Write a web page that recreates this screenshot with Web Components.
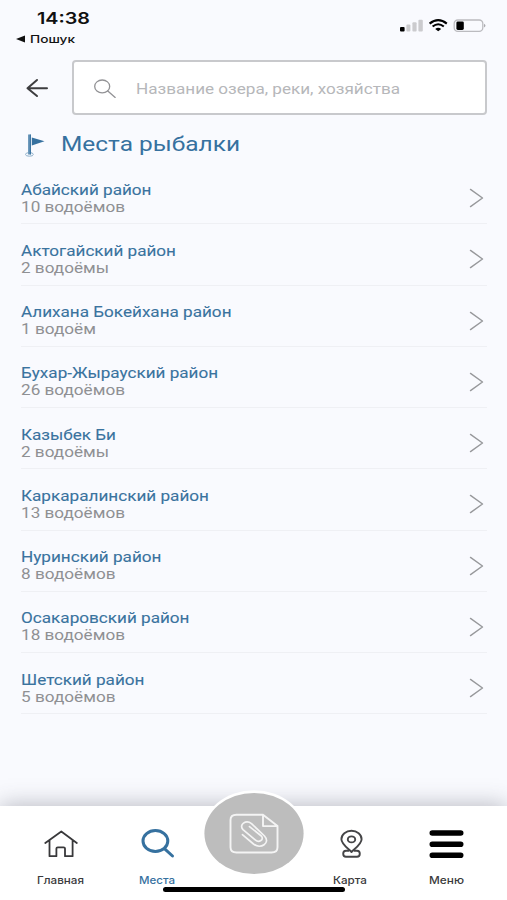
<!DOCTYPE html>
<html lang="ru">
<head>
<meta charset="utf-8">
<title>Места рыбалки</title>
<style>
    html, body {
        margin: 0;
        height: 100%;
    }
    body {
        overflow: hidden;
        background: #f9fafe;
        font-family: Roboto, "Liberation Sans", sans-serif;
    }
</style>
</head>
<body>
<fishing-app></fishing-app>
<script>
// one line of text stretched to the given width
window.customElements.define('wide-text', class extends HTMLElement {

    constructor() {
        super()
        this.attachShadow({ mode: 'open' })
        this.shadowRoot.innerHTML = `
            <style>
                :host {
                    display: block;
                    white-space: nowrap;
                }
                span {
                    display: inline-block;
                    vertical-align: top;
                    transform-origin: 0 50%;
                }
            </style>
            <span><slot></slot></span>
        `
    }

    connectedCallback() {
        const width = Number(this.getAttribute('width'))
        const span = this.shadowRoot.querySelector('span')
        this.style.width = `${width}px`
        span.style.transform = `scaleX(${width / span.getBoundingClientRect().width})`
    }
})

window.customElements.define('status-bar', class extends HTMLElement {

    constructor() {
        super()
        this.attachShadow({ mode: 'open' })
        this.shadowRoot.innerHTML = `
            <style>
                :host {
                    display: flex;
                    justify-content: space-between;
                    height: 60px;
                    box-sizing: border-box;
                    padding: 8px 20px 0 16px;
                    font-family: Inter, sans-serif;
                    color: #111;
                }
                .time {
                    margin-left: 21px;
                    font-size: 16px;
                    line-height: 21px;
                    font-weight: 600;
                }
                .back {
                    display: flex;
                    align-items: center;
                    gap: 5px;
                    font-size: 11px;
                    line-height: 20px;
                    font-weight: 500;
                }
                .signs {
                    margin-top: 10px;
                }
            </style>
            <div>
                <wide-text class="time" width="53">14:38</wide-text>
                <div class="back">
                    <svg width="9" height="8"><path d="M0 4 9 .5v7z" fill="#111"/></svg>
                    <wide-text width="45">Пошук</wide-text>
                </div>
            </div>
            <svg class="signs" width="88" height="16" viewBox="0 0 88 16">
                <rect x="1" y="9" width="4.6" height="4.6" rx="1" fill="#000"/>
                <g fill="#cbcbce">
                    <rect x="7.4" y="6.4" width="4" height="7.2" rx="1"/>
                    <rect x="13.4" y="4.2" width="4.2" height="9.4" rx="1"/>
                    <rect x="19.4" y="1.8" width="4.4" height="11.8" rx="1"/>
                </g>
                <g fill="none" stroke="#000" stroke-width="2.1">
                    <path d="M30.6 5.6Q39.2-1.4 47.8 5.6"/>
                    <path d="M33.6 8.5Q39.2 4 44.8 8.5"/>
                </g>
                <path d="M36.2 10.9Q39.2 8.7 42.2 10.9L39.2 13.3z" fill="#000"/>
                <rect x="55.2" y="2" width="28.6" height="11.4" rx="3.6" fill="none" stroke="#bbbbbf" stroke-width="1.3"/>
                <rect x="57.4" y="3.4" width="7.4" height="8.6" rx="1.4" fill="#000"/>
                <path d="M85 5.8q3 1.9 0 3.8z" fill="#aaaaae"/>
            </svg>
        `
    }
})

window.customElements.define('search-bar', class extends HTMLElement {

    constructor() {
        super()
        this.attachShadow({ mode: 'open' })
        this.shadowRoot.innerHTML = `
            <style>
                :host {
                    display: flex;
                    align-items: center;
                    gap: 23px;
                    padding: 0 20px 0 26px;
                    height: 55px;
                }
                .field {
                    flex: 1;
                    display: flex;
                    align-items: center;
                    gap: 17.5px;
                    height: 55px;
                    box-sizing: border-box;
                    padding: 3px 20px 0;
                    border: 2px solid #c8c9cc;
                    border-radius: 4px;
                    background: #fff;
                    color: #b6b7ba;
                    font-size: 14px;
                    line-height: 20px;
                }
            </style>
            <svg width="23" height="20" viewBox="0 0 23 20" fill="none" stroke="#3d3d3f" stroke-width="2" stroke-linecap="round" stroke-linejoin="round">
                <path d="M21 10.2H1.5M11 2 1.5 10.2 11 18"/>
            </svg>
            <div class="field">
                <svg width="24" height="20" viewBox="0 0 24 20" fill="none" stroke="#929295" stroke-width="1.3" stroke-linecap="round">
                    <ellipse cx="8.2" cy="7.4" rx="7.5" ry="6.4"/>
                    <path d="m13.8 12 7.4 6.4"/>
                </svg>
                <wide-text width="264"><slot></slot></wide-text>
            </div>
        `
    }
})

window.customElements.define('page-title', class extends HTMLElement {

    constructor() {
        super()
        this.attachShadow({ mode: 'open' })
        this.shadowRoot.innerHTML = `
            <style>
                :host {
                    display: flex;
                    align-items: center;
                    gap: 15px;
                    height: 48px;
                    box-sizing: border-box;
                    padding: 9px 24px 0 25px;
                    color: #36719f;
                    font-size: 21px;
                    line-height: 26px;
                }
                svg {
                    margin-top: 4px;
                }
            </style>
            <svg width="21" height="24" viewBox="0 0 21 24">
                <ellipse cx="4.4" cy="20.4" rx="3.9" ry="1.8" fill="none" stroke="#8fb0cb" stroke-width="1"/>
                <path d="M3 .5h2.8v20H3z" fill="#6f9abc"/>
                <path d="M4.7.5h1.2v20H4.7z" fill="#36719f"/>
                <path d="M6.8 3.4 19.5 7.3 6.8 11.4z" fill="#36719f"/>
            </svg>
            <wide-text width="179"><slot></slot></wide-text>
        `
    }
})

window.customElements.define('place-row', class extends HTMLElement {

    constructor() {
        super()
        this.attachShadow({ mode: 'open' })
    }

    connectedCallback() {
        this.shadowRoot.innerHTML = `
            <style>
                :host {
                    display: flex;
                    justify-content: space-between;
                    height: 61.25px;
                    box-sizing: border-box;
                    padding: 18.6px 3px 0 0;
                    border-bottom: 1px solid #eff0f4;
                    font-size: 14px;
                    line-height: 17px;
                }
                .name {
                    color: #3a739e;
                    -webkit-text-stroke: .1px #3a739e;
                }
                .count {
                    color: #8f9093;
                }
                svg {
                    margin-top: 6.6px;
                }
            </style>
            <div>
                <wide-text class="name" width="${this.dataset.nameWidth}"><slot></slot></wide-text>
                <wide-text class="count" width="${this.dataset.countWidth}"><slot name="count"></slot></wide-text>
            </div>
            <svg width="15" height="20" viewBox="0 0 15 20" fill="none" stroke="#97989b" stroke-width="1.4" stroke-linecap="round" stroke-linejoin="round">
                <path d="M1.5 1.4 13.5 10 1.5 18.6"/>
            </svg>
        `
    }
})

window.customElements.define('tab-item', class extends HTMLElement {

    constructor() {
        super()
        this.attachShadow({ mode: 'open' })
    }

    connectedCallback() {
        this.shadowRoot.innerHTML = `
            <style>
                :host {
                    display: flex;
                    flex-direction: column;
                    align-items: center;
                    color: #3a3a3c;
                    font: 500 10px/14px Inter, sans-serif;
                }
                :host([active]) {
                    color: #36719f;
                }
                .icon {
                    height: 34px;
                    margin: 21px 0 12px;
                }
            </style>
            <div class="icon"><slot name="icon"></slot></div>
            <wide-text width="${this.dataset.width}"><slot></slot></wide-text>
        `
    }
})

window.customElements.define('tab-bar', class extends HTMLElement {

    constructor() {
        super()
        this.attachShadow({ mode: 'open' })
        this.shadowRoot.innerHTML = `
            <style>
                :host {
                    display: block;
                    position: relative;
                    height: 94.5px;
                    background: #fff;
                    box-shadow: 0 -1px 22px rgba(60, 62, 75, .34);
                }
                nav {
                    display: grid;
                    grid-template-columns: 96.5px 96.5px 96px 97px 96px;
                    padding-left: 12px;
                }
                svg {
                    display: block;
                }
                .attach {
                    position: absolute;
                    left: 202px;
                    top: -15.5px;
                }
                .home {
                    position: absolute;
                    left: 163px;
                    top: 81.5px;
                    width: 182px;
                    height: 5px;
                    border-radius: 3px;
                    background: #000;
                }
            </style>
            <nav>
                <tab-item data-width="47">Главная
                    <svg slot="icon" width="36" height="34" viewBox="-.8 0 36 34" fill="none" stroke="#39393b" stroke-width="1.8" stroke-linecap="round" stroke-linejoin="round">
                        <path d="M2.5 16 18.5 4.5 34 16M6.7 13.5V29.2H13.6V21.6Q13.6 20.4 15 20.4H20.8Q22.2 20.4 22.2 21.6V29.2H29.8V13.5"/>
                    </svg>
                </tab-item>
                <tab-item active data-width="36">Места
                    <svg slot="icon" width="36" height="34" viewBox="-1 0 36 34" fill="none" stroke="#36719f" stroke-width="3" stroke-linecap="round">
                        <ellipse cx="15.4" cy="14" rx="12.4" ry="10.4"/>
                        <path d="m24.7 21.8 7.8 7.2"/>
                    </svg>
                </tab-item>
                <span></span>
                <tab-item data-width="34">Карта
                    <svg slot="icon" width="28" height="34" viewBox="-1 0 28 34" fill="none" stroke="#454547" stroke-width="1.9" stroke-linejoin="round">
                        <path d="M14.5 25C10.5 21 4.4 16.8 4.4 12.2a10.1 8.4 0 0 1 20.2 0C24.6 16.8 18.5 21 14.5 25z"/>
                        <ellipse cx="14.5" cy="12.4" rx="3.7" ry="3"/>
                        <path d="M12.2 23.7H9a2.8 3 0 0 0 0 6H20a2.8 3 0 0 0 0-6H16.8"/>
                    </svg>
                </tab-item>
                <tab-item data-width="35">Меню
                    <svg slot="icon" width="36" height="34" viewBox="0 0 36 34" stroke="#000" stroke-width="5.6" stroke-linecap="round">
                        <path d="M4.3 6H32.7M4.3 17.2H32.7M4.3 28.3H32.7"/>
                    </svg>
                </tab-item>
            </nav>
            <svg class="attach" width="104" height="86" viewBox="0 0 104 86" fill="none" stroke="#f4f4f4" stroke-linejoin="round" stroke-linecap="round">
                <ellipse cx="52" cy="43" rx="51.5" ry="42.7" fill="#fff" stroke="none"/>
                <ellipse cx="52" cy="43.5" rx="49.6" ry="40.6" fill="#bdbdbd" stroke="none"/>
                <path d="M61 24.7H34.5Q28.5 24.7 28.5 30V57.2Q28.5 62.5 34.5 62.5H69.5Q75.5 62.5 75.5 57.2V36.1zM61 24.7V36.1H75.5" stroke-width="1.9"/>
                <path d="M40.4 44.7 51.5 54C58.5 59.5 69 53 62.5 46L49.5 33.6C44 29.5 36.5 34.5 41 39.6L53.5 50.1C57 53 62.5 49.5 59.3 46L47.5 36.6" stroke-width="1.7"/>
            </svg>
            <div class="home"></div>
        `
    }
})

window.customElements.define('fishing-app', class extends HTMLElement {

    get places() {
        // name, name width, count, count width
        return [
            ['Абайский район', 130.5, '10 водоёмов', 104],
            ['Актогайский район', 155, '2 водоёмы', 88],
            ['Алихана Бокейхана район', 210.5, '1 водоём', 75],
            ['Бухар-Жырауский район', 197, '26 водоёмов', 104],
            ['Казыбек Би', 95, '2 водоёмы', 88],
            ['Каркаралинский район', 188, '13 водоёмов', 104],
            ['Нуринский район', 140.5, '8 водоёмов', 94.5],
            ['Осакаровский район', 168.5, '18 водоёмов', 104],
            ['Шетский район', 123.5, '5 водоёмов', 94.5]
        ]
    }

    constructor() {
        super()
        this.attachShadow({ mode: 'open' })
        this.shadowRoot.innerHTML = `
            <style>
                :host {
                    display: flex;
                    flex-direction: column;
                    height: 900px;
                    overflow: hidden;
                }
                main {
                    flex: 1;
                    padding: 0 20px 0 21px;
                }
            </style>
            <status-bar></status-bar>
            <search-bar>Название озера, реки, хозяйства</search-bar>
            <page-title>Места рыбалки</page-title>
            <main>
                ${this.places.map(([name, nameWidth, count, countWidth]) => `
                    <place-row data-name-width="${nameWidth}" data-count-width="${countWidth}">${name}<span slot="count">${count}</span></place-row>
                `).join('')}
            </main>
            <tab-bar></tab-bar>
        `
    }
})
</script>
</body>
</html>
